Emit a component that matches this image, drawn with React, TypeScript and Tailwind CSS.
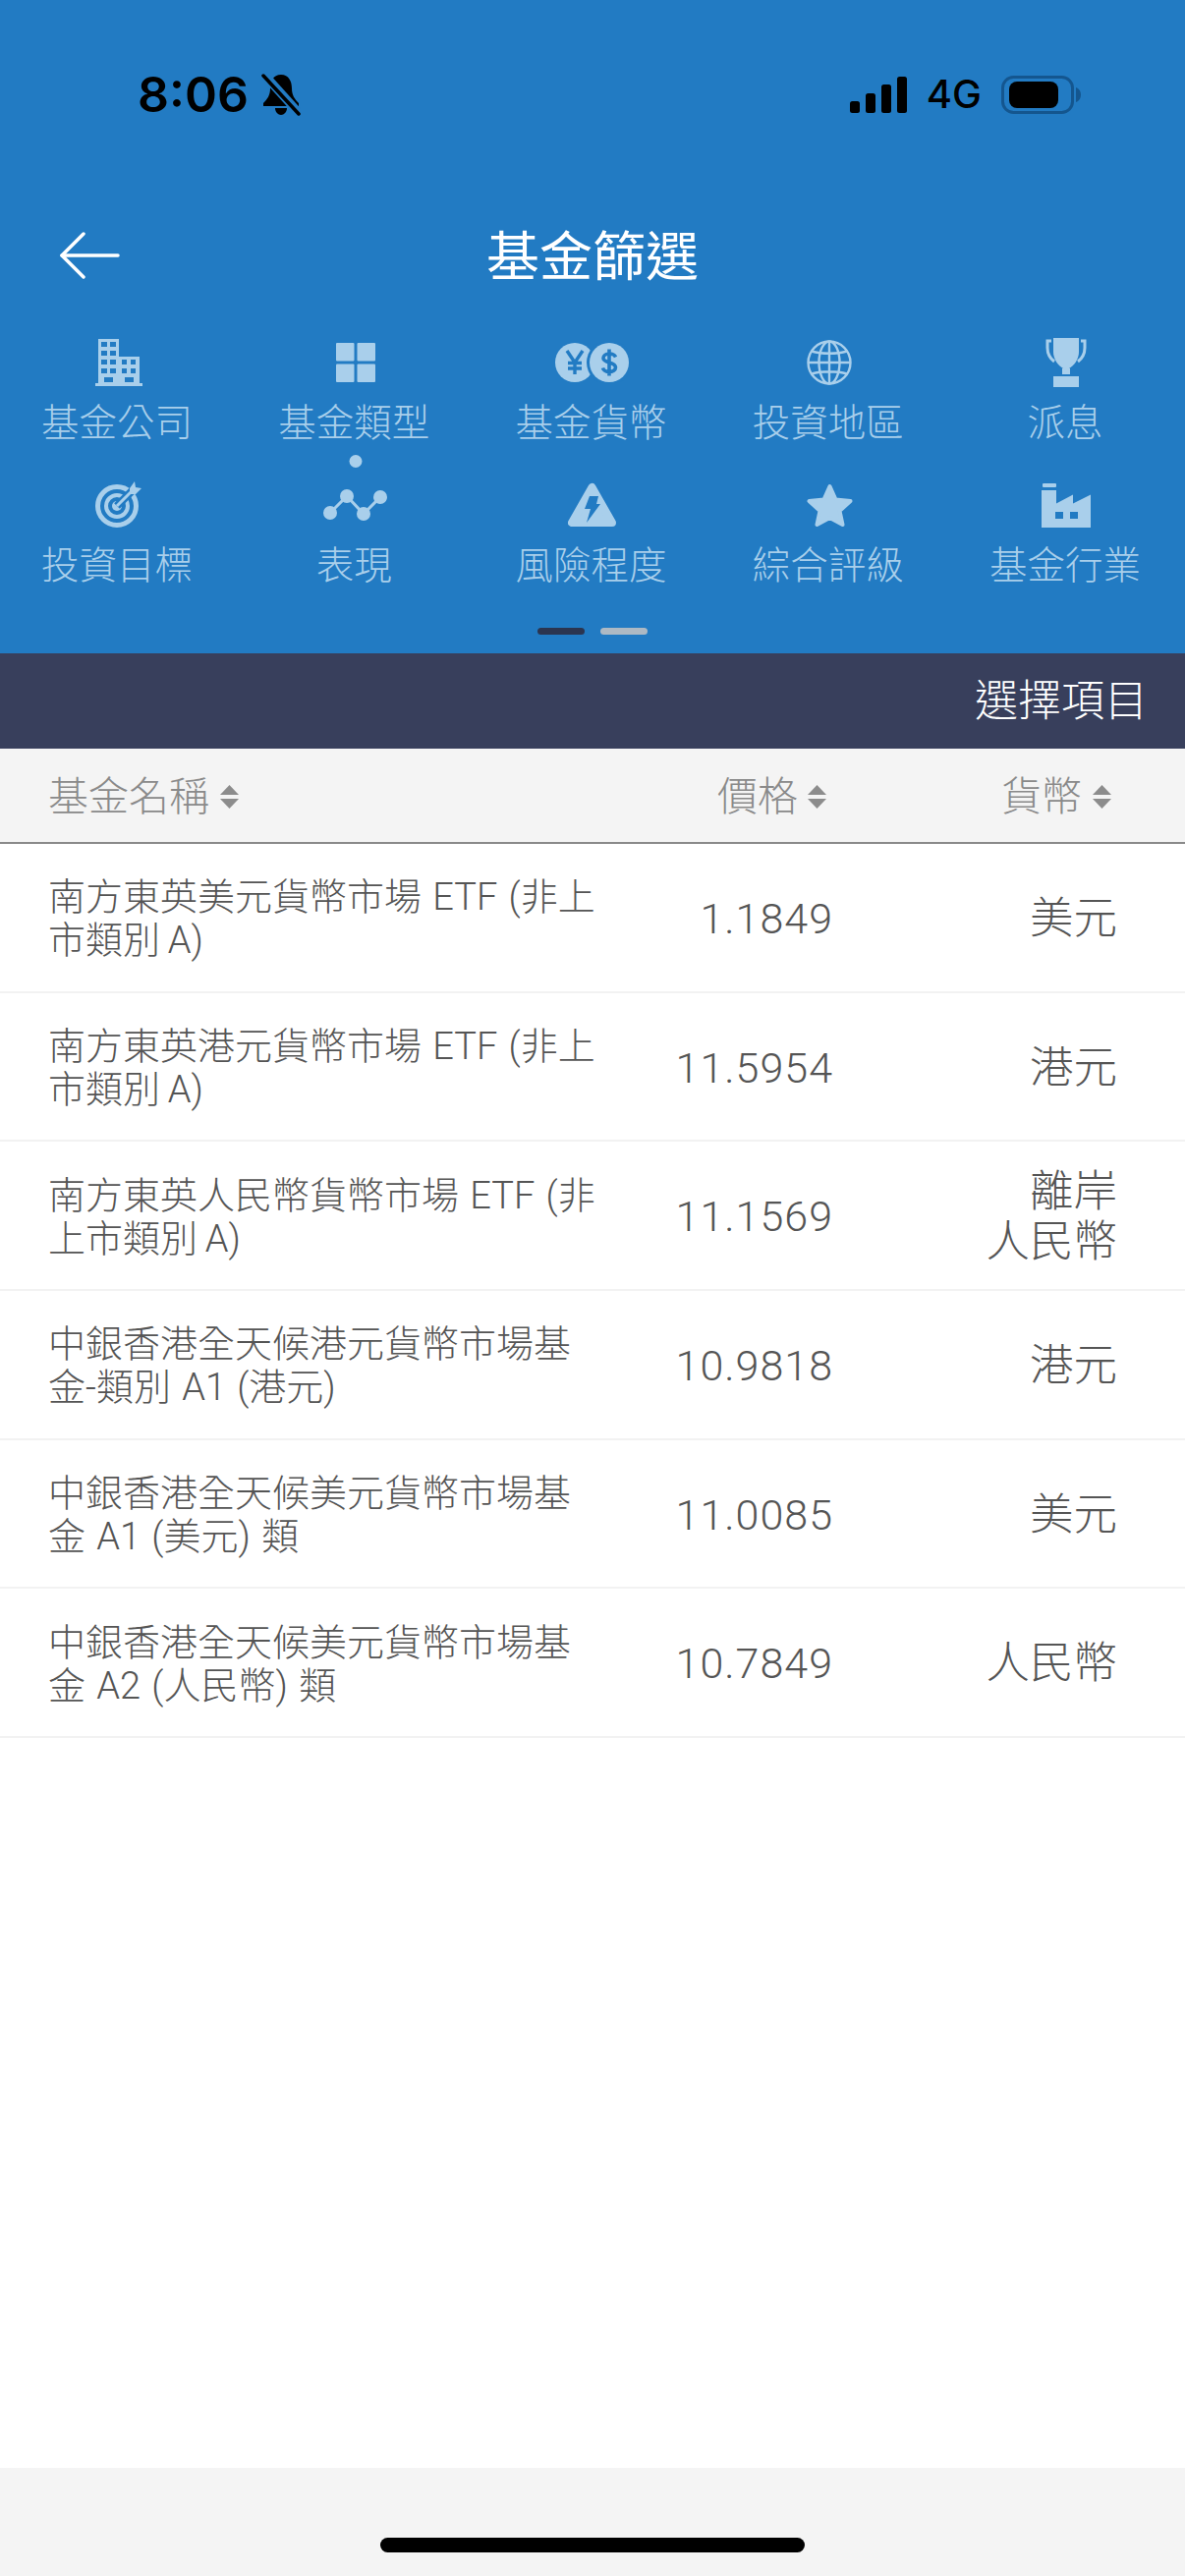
import React from "react";

const CJK = "font-['Roboto','Noto_Sans_CJK_TC',sans-serif]";

// 顶部状态栏图标
const BellOff = () => (
  <svg width="40" height="43" viewBox="0 0 40 43">
    <path
      d="M20 1C28 1 31 8 31 15C31 22 34 26 38 30V33H2V30C6 26 9 22 9 15C9 8 12 1 20 1Z"
      fill="#000"
    />
    <path d="M14 35H26C26 39 23 42 20 42C17 42 14 39 14 35Z" fill="#000" />
    <path d="M1 -1L39 41" stroke="#227bc3" strokeWidth="9" />
    <path d="M2 2L38 41" stroke="#000" strokeWidth="3.5" strokeLinecap="round" />
  </svg>
);

const Signal = () => (
  <svg width="58" height="37" viewBox="0 0 58 37">
    <rect x="0" y="25" width="10" height="12" rx="2.5" fill="#000" />
    <rect x="16" y="17" width="10" height="20" rx="2.5" fill="#000" />
    <rect x="32" y="8" width="10" height="29" rx="2.5" fill="#000" />
    <rect x="48" y="0" width="10" height="37" rx="2.5" fill="#000" />
  </svg>
);

const Battery = () => (
  <svg width="81" height="39" viewBox="0 0 81 39">
    <rect x="1.5" y="1.5" width="71" height="36" rx="11" fill="none" stroke="#14568f" strokeWidth="3" />
    <rect x="8" y="6" width="50" height="27" rx="8" fill="#000" />
    <path d="M76 12C79 13 81 16 81 19.5C81 23 79 26 76 27Z" fill="#14568f" />
  </svg>
);

const BackArrow = () => (
  <svg width="62" height="48" viewBox="0 0 62 48" fill="none" stroke="#fff" strokeWidth="3.5" strokeLinecap="round" strokeLinejoin="round">
    <path d="M60 24H3" />
    <path d="M25 2L3 24L25 46" />
  </svg>
);

// 筛选分类图标
const ICON = "#a9cfeb";
const BLUE = "#227bc3";

const BuildingIcon = () => (
  <svg width="48" height="48" viewBox="0 0 48 48">
    <rect x="3" y="0" width="21" height="47" fill={ICON} />
    <rect x="24" y="18" width="21" height="29" fill={ICON} />
    <rect x="0" y="45" width="48" height="3" fill={ICON} />
    {[3, 12, 21, 30].map((y) =>
      [6, 15].map((x) => <rect key={`${x}-${y}`} x={x} y={y} width="6" height="5" fill={BLUE} />)
    )}
    {[21, 30].map((y) =>
      [27, 36].map((x) => <rect key={`${x}-${y}`} x={x} y={y} width="5" height="5" fill={BLUE} />)
    )}
    <rect x="9" y="39" width="9" height="5" fill={BLUE} />
    <rect x="30" y="39" width="9" height="5" fill={BLUE} />
  </svg>
);

const GridIcon = () => (
  <svg width="40" height="40" viewBox="0 0 40 40" fill={ICON}>
    <rect x="0" y="0" width="18.5" height="18.5" rx="1" />
    <rect x="21.5" y="0" width="18.5" height="18.5" rx="1" />
    <rect x="0" y="21.5" width="18.5" height="18.5" rx="1" />
    <rect x="21.5" y="21.5" width="18.5" height="18.5" rx="1" />
  </svg>
);

const CoinsIcon = () => (
  <svg width="75" height="40" viewBox="0 0 75 40" fill="none">
    <circle cx="20" cy="20" r="20" fill={ICON} />
    <circle cx="55" cy="20" r="23" fill={BLUE} />
    <circle cx="55" cy="20" r="20" fill={ICON} />
    <path d="M12 8L20 20L28 8M20 20V32M13 20.5H27M13 26H27" stroke={BLUE} strokeWidth="3.4" />
    <path
      d="M61.5 14.5C60.5 12 58 11 55 11C51.5 11 49 13 49 15.5C49 21 61.5 19 61.5 25C61.5 27.5 58.5 29.5 55 29.5C51.5 29.5 49 27.5 48.5 25.5M55 6.5V33.5"
      stroke={BLUE}
      strokeWidth="3.6"
    />
  </svg>
);

const GlobeIcon = () => (
  <svg width="46" height="46" viewBox="0 0 46 46" fill="none" stroke={ICON} strokeWidth="2.4">
    <circle cx="23" cy="23" r="21.5" />
    <ellipse cx="23" cy="23" rx="10.5" ry="21.5" />
    <path d="M23 1.5V44.5M1.5 23H44.5M5 11.5C15 14.5 31 14.5 41 11.5M5 34.5C15 31.5 31 31.5 41 34.5" />
  </svg>
);

const TrophyIcon = () => (
  <svg width="42" height="50" viewBox="0 0 42 50" fill={ICON}>
    <path d="M8 0H34V14C34 22 29 28 24 31H18C13 28 8 22 8 14Z" />
    <rect x="17" y="31" width="8" height="6" />
    <rect x="8" y="39" width="26" height="11" />
    <path d="M6 3H2V10C2 16 5 21 9 24M36 3H40V10C40 16 37 21 33 24" fill="none" stroke={ICON} strokeWidth="3" />
  </svg>
);

const TargetIcon = () => (
  <svg width="48" height="48" viewBox="0 0 48 48" fill="none">
    <circle cx="22" cy="25" r="19.5" stroke={ICON} strokeWidth="5" />
    <circle cx="22" cy="25" r="11" stroke={ICON} strokeWidth="4" />
    <circle cx="22" cy="25" r="5" fill={ICON} />
    <path d="M22 25L40 7" stroke={BLUE} strokeWidth="8" />
    <path d="M22 25L38 9" stroke={ICON} strokeWidth="3" />
    <path d="M35 7L40 0L41 6L47 7L41 13H35Z" fill={ICON} />
  </svg>
);

const ChartIcon = () => (
  <svg width="65" height="32" viewBox="0 0 65 32" fill={ICON}>
    <path d="M7 24L24 7L41 25L58 8" fill="none" stroke={ICON} strokeWidth="3" />
    <circle cx="7" cy="24" r="7" />
    <circle cx="24" cy="7" r="7" />
    <circle cx="41" cy="25" r="7" />
    <circle cx="58" cy="8" r="7" />
  </svg>
);

const RiskIcon = () => (
  <svg width="49" height="46" viewBox="0 0 49 46">
    <path d="M24.5 5L4 41H45Z" fill={ICON} stroke={ICON} strokeWidth="8" strokeLinejoin="round" />
    <path d="M22 14H31L29 22H33L19 41L23 27H17Z" fill={BLUE} />
  </svg>
);

const StarIcon = () => (
  <svg width="47" height="45" viewBox="0 0 47 45">
    <path
      d="M23.5 3L29.5 16.5L44.5 18L33.5 28L36.5 42L23.5 35L10.5 42L13.5 28L2.5 18L17.5 16.5Z"
      fill={ICON}
      stroke={ICON}
      strokeWidth="4"
      strokeLinejoin="round"
    />
  </svg>
);

const FactoryIcon = () => (
  <svg width="50" height="45" viewBox="0 0 50 45">
    <rect x="1" y="0" width="14" height="4" rx="1" fill={ICON} />
    <path d="M0 7H15V20.5L32 11.5V20.5L50 11.5V45H0Z" fill={ICON} />
    <rect x="14" y="29" width="8" height="7" fill={BLUE} />
    <rect x="29" y="29" width="8" height="7" fill={BLUE} />
  </svg>
);

const SortIcon = () => (
  <svg width="19" height="24" viewBox="0 0 19 24" fill="#8c8c8c">
    <path d="M9.5 0L19 10H0Z" />
    <path d="M9.5 24L19 14H0Z" />
  </svg>
);

const filters = [
  { label: "基金公司", icon: <BuildingIcon /> },
  { label: "基金類型", icon: <GridIcon />, dot: true },
  { label: "基金貨幣", icon: <CoinsIcon /> },
  { label: "投資地區", icon: <GlobeIcon /> },
  { label: "派息", icon: <TrophyIcon /> },
  { label: "投資目標", icon: <TargetIcon /> },
  { label: "表現", icon: <ChartIcon /> },
  { label: "風險程度", icon: <RiskIcon /> },
  { label: "綜合評級", icon: <StarIcon /> },
  { label: "基金行業", icon: <FactoryIcon /> },
];

const funds = [
  { name: "南方東英美元貨幣市場 ETF (非上市類別\u2009A)", price: "1.1849", currency: "美元" },
  { name: "南方東英港元貨幣市場 ETF (非上市類別\u2009A)", price: "11.5954", currency: "港元" },
  { name: "南方東英人民幣貨幣市場 ETF (非上市類別\u2009A)", price: "11.1569", currency: "離岸\n人民幣" },
  { name: "中銀香港全天候港元貨幣市場基金-類別 A1 (港元)", price: "10.9818", currency: "港元" },
  { name: "中銀香港全天候美元貨幣市場基金 A1 (美元) 類", price: "11.0085", currency: "美元" },
  { name: "中銀香港全天候美元貨幣市場基金 A2 (人民幣) 類", price: "10.7849", currency: "人民幣" },
];

export default function App() {
  return (
    <div className={`flex h-[2622px] w-[1206px] flex-col overflow-hidden bg-white ${CJK}`}>
      {/* 蓝色头部 */}
      <div className="h-[665px] bg-[#227bc3] pt-[70px]">
        <div className="flex h-[52px] items-center justify-between pl-[140px] pr-[106px]">
          <div className="flex items-center gap-[13px]">
            <span className="font-['Inter',sans-serif] text-[50px] font-semibold leading-none text-black">8:06</span>
            <BellOff />
          </div>
          <div className="flex items-center">
            <Signal />
            <span className="mx-[20px] font-['Inter',sans-serif] text-[40px] font-medium leading-none text-black">4G</span>
            <Battery />
          </div>
        </div>

        <div className="mt-[107px] grid h-[60px] grid-cols-[1fr_auto_1fr] items-center">
          <div className="pl-[60px]">
            <BackArrow />
          </div>
          <h1 className="mt-[7px] text-[54px] font-normal leading-none text-white">基金篩選</h1>
          <div />
        </div>

        <div className="mt-[55px] grid grid-cols-5">
          {filters.map((f) => (
            <div key={f.label} className="relative flex h-[145px] flex-col items-center">
              <div className="flex h-[50px] items-center justify-center">{f.icon}</div>
              <div className="mr-[3px] mt-[14px] text-[38.5px] font-light leading-[45px] text-[#a9cfeb]">{f.label}</div>
              {f.dot && <div className="absolute left-1/2 top-[119px] h-[13px] w-[13px] -translate-x-1/2 rounded-full bg-[#a9cfeb]" />}
            </div>
          ))}
        </div>

        <div className="mt-[5px] flex justify-center gap-[16px]">
          <div className="h-[7px] w-[48px] rounded-full bg-[#2b3550]" />
          <div className="h-[7px] w-[48px] rounded-full bg-[#adb9c4]" />
        </div>
      </div>

      {/* 选择项目 */}
      <div className="flex h-[97px] items-center justify-end bg-[#383f5c] pr-[38px]">
        <span className="text-[44px] font-light leading-none text-white">選擇項目</span>
      </div>

      {/* 表头 */}
      <div className="flex h-[97px] items-center border-b-2 border-[#8a8a8a] bg-[#f4f4f4] pt-[3px] text-[41px] font-light leading-none text-[#8a8a8a]">
        <div className="flex w-[610px] items-center gap-[11px] pl-[49px]">
          基金名稱
          <SortIcon />
        </div>
        <div className="flex w-[238px] items-center justify-end gap-[10px] pr-[7px]">
          價格
          <SortIcon />
        </div>
        <div className="flex flex-1 items-center justify-end gap-[11px] pr-[75px]">
          貨幣
          <SortIcon />
        </div>
      </div>

      {/* 基金列表 */}
      {funds.map((fund) => (
        <div key={fund.name + fund.currency} className="flex h-[151.7px] items-center border-b-2 border-[#f2f2f2] pt-[3px] text-[#555]">
          <div className="w-[610px] pl-[49px] text-[38px] font-light leading-[44px] [word-spacing:2px]">{fund.name}</div>
          <div className="w-[238px] text-right text-[43px] font-light leading-none tracking-[1px]">{fund.price}</div>
          <div className="flex-1 whitespace-pre-line pr-[69px] text-right text-[44.5px] font-light leading-[51px]">{fund.currency}</div>
        </div>
      ))}

      <div className="flex-1" />

      {/* 底部 */}
      <div className="h-[110px] bg-[#f4f4f4] pt-[71px]">
        <div className="mx-auto h-[15px] w-[432px] rounded-full bg-black" />
      </div>
    </div>
  );
}
